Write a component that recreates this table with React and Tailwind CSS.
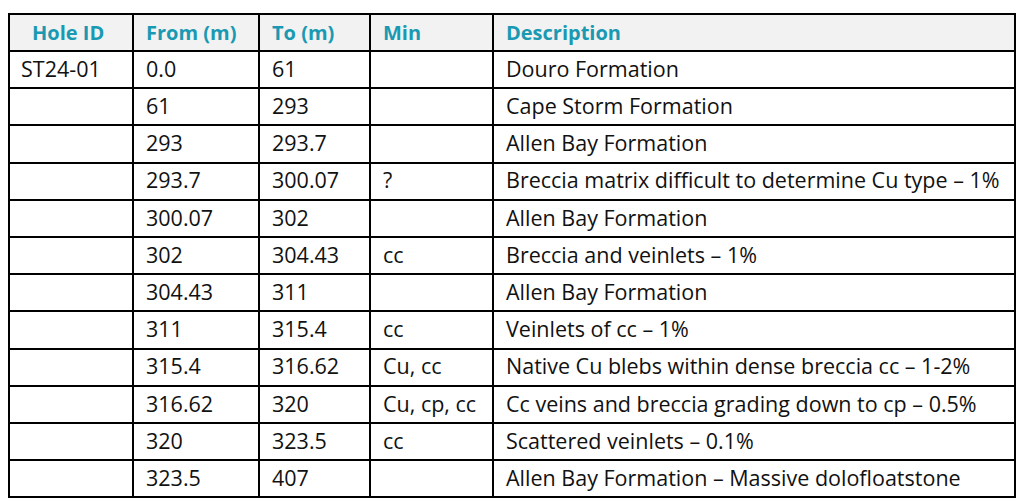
const rows = [
  ["ST24-01", "0.0", "61", "", "Douro Formation"],
  ["", "61", "293", "", "Cape Storm Formation"],
  ["", "293", "293.7", "", "Allen Bay Formation"],
  ["", "293.7", "300.07", "?", "Breccia matrix difficult to determine Cu type – 1%"],
  ["", "300.07", "302", "", "Allen Bay Formation"],
  ["", "302", "304.43", "cc", "Breccia and veinlets – 1%"],
  ["", "304.43", "311", "", "Allen Bay Formation"],
  ["", "311", "315.4", "cc", "Veinlets of cc – 1%"],
  ["", "315.4", "316.62", "Cu, cc", "Native Cu blebs within dense breccia cc – 1-2%"],
  ["", "316.62", "320", "Cu, cp, cc", "Cc veins and breccia grading down to cp – 0.5%"],
  ["", "320", "323.5", "cc", "Scattered veinlets – 0.1%"],
  ["", "323.5", "407", "", "Allen Bay Formation – Massive dolofloatstone"],
];

const headers = ["Hole ID", "From (m)", "To (m)", "Min", "Description"];
const widths = ["w-[124px]", "w-[126px]", "w-[111px]", "w-[123px]", "w-[522px]"];

export default function App() {
  return (
    <div className="bg-white min-h-screen pt-[13px] pl-[8px] font-['Open_Sans','Liberation_Sans',sans-serif]">
      <table className="border-collapse border-2 border-[#222] leading-none">
        <thead>
          <tr className="h-[37px] bg-[#f2f2f2] text-[20px]">
            {headers.map((h, i) => (
              <th
                key={h}
                className={`${widths[i]} border-2 border-black text-left font-bold text-[#1a99b3] align-middle ${
                  i === 0 ? "pl-[22px]" : "pl-[12px]"
                }`}
              >
                {h}
              </th>
            ))}
          </tr>
        </thead>
        <tbody className="text-[21.5px]">
          {rows.map((r, ri) => (
            <tr key={ri} className="h-[37.2px]">
              {r.map((c, ci) => (
                <td
                  key={ci}
                  className={`border-2 border-black text-[#111] align-middle whitespace-nowrap pb-[2px] ${
                    ci === 0 ? "pl-[11px]" : "pl-[12px]"
                  }`}
                >
                  {c}
                </td>
              ))}
            </tr>
          ))}
        </tbody>
      </table>
    </div>
  );
}
